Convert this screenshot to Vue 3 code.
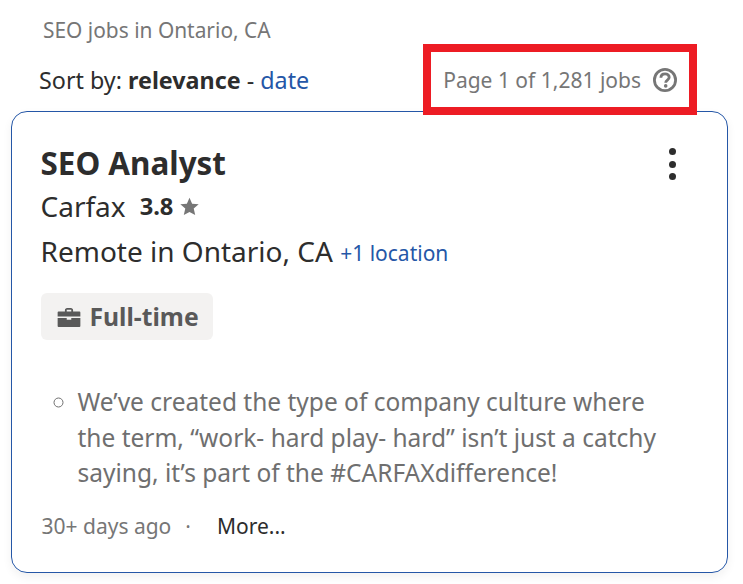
<template>
  <div class="page">
    <div class="search-title">SEO jobs in Ontario, CA</div>
    <div class="toolbar">
      <div class="sort">Sort by: <b>relevance</b> - <a class="link">date</a></div>
      <div class="count">
        <span>Page 1 of 1,281 jobs</span>
        <svg class="help" width="26" height="26" viewBox="0 0 26 26">
          <circle cx="13" cy="13" r="10.6" fill="none" stroke="#767676" stroke-width="2.8" />
          <path d="M8.900 10.800c0-2.500 1.800-4 4.200-4s4.100 1.500 4.100 3.500c0 2.800-3.500 2.800-3.500 5.400" fill="none" stroke="#767676" stroke-width="2.800" />
          <circle cx="13.700" cy="18.900" r="1.800" fill="#767676" />
        </svg>
      </div>
    </div>
    <div class="card">
      <div class="card-head">
        <h2 class="job-title">SEO Analyst</h2>
        <div class="dots"><i></i><i></i><i></i></div>
      </div>
      <div class="company">
        <span>Carfax</span>
        <b class="rating">3.8</b>
        <svg class="star" width="19" height="19" viewBox="0 0 18 18">
          <path d="M9 .6l2.500 5.700 6.200.6-4.700 4.100 1.400 6.100L9 14.100l-5.400 3 1.400-6.100L.3 6.900l6.200-.6z" fill="#767676" />
        </svg>
      </div>
      <div class="location">Remote in Ontario, CA <a class="link more-loc">+1 location</a></div>
      <div class="tag">
        <svg width="24" height="20" viewBox="0 0 25 22">
          <path d="M8 3.500C8 2 9 1 10.500 1h4C16 1 17 2 17 3.500V5h7a1 1 0 0 1 1 1v4.500H0V6a1 1 0 0 1 1-1h7zM10 3v2h5V3z" fill="#595959" fill-rule="evenodd" />
          <path d="M0 12h10v2h5v-2h10v9a1 1 0 0 1-1 1H1a1 1 0 0 1-1-1z" fill="#595959" />
        </svg>
        <span>Full-time</span>
      </div>
      <ul class="snippet">
        <li>We’ve created the type of company culture where the term, “work- hard play- hard” isn’t just a catchy saying, it’s part of the #CARFAXdifference!</li>
      </ul>
      <div class="meta">
        <span>30+ days ago</span>
        <span class="sep">·</span>
        <span class="more">More...</span>
      </div>
    </div>
    <div class="highlight"></div>
  </div>
</template>

<script setup>
</script>

<style>
html, body {
  margin: 0;
  background: #fff;
}
</style>

<style scoped>
.page {
  position: relative;
  width: 743px;
  height: 584px;
  overflow: hidden;
  font-family: "Noto Sans", sans-serif;
  color: #2d2d2d;
  box-sizing: border-box;
  padding: 16px 15px 0 11px;
}

.search-title {
  margin-left: 32px;
  font-size: 20.9px;
  line-height: 28px;
  color: #767676;
}

.toolbar {
  display: flex;
  justify-content: space-between;
  align-items: center;
  height: 40px;
  margin-top: 16px;
  padding: 0 50px 0 28px;
}

.sort {
  font-size: 23.3px;
}

.link {
  color: #2557a7;
}

.count {
  display: flex;
  align-items: center;
  gap: 11px;
  font-size: 21px;
  color: #767676;
}

.card {
  box-sizing: border-box;
  height: 462px;
  margin-top: 11px;
  padding: 30px 29px 0 28.5px;
  border: 1.5px solid #2557a7;
  border-radius: 16px;
  box-shadow: 0 4px 10px rgba(0, 0, 0, 0.06);
}

.card-head {
  display: flex;
  justify-content: space-between;
  align-items: flex-start;
}

.job-title {
  margin: 0;
  font-size: 31.4px;
  line-height: 42px;
  font-weight: 700;
}

.dots {
  display: flex;
  flex-direction: column;
  gap: 5.5px;
  margin: 6px 22px 0 0;
}

.dots i {
  width: 7px;
  height: 7px;
  border-radius: 50%;
  background: #2d2d2d;
}

.company {
  display: flex;
  align-items: center;
  margin-top: 3px;
  font-size: 28px;
  line-height: 38px;
}

.rating {
  margin-left: 14px;
  font-size: 23.7px;
}

.star {
  margin-left: 7px;
}

.location {
  margin-top: 7px;
  font-size: 28px;
  line-height: 38px;
}

.more-loc {
  font-size: 21px;
  vertical-align: 1px;
}

.tag {
  display: inline-flex;
  align-items: center;
  gap: 9px;
  height: 47px;
  margin-top: 21px;
  padding: 0 14px 0 16px;
  font-size: 24.7px;
  font-weight: 700;
  color: #595959;
  background: #f3f2f1;
  border-radius: 6px;
}

.snippet {
  margin: 44px 40px 0 0;
  padding: 0 0 0 37px;
  list-style: circle;
  font-size: 24.5px;
  line-height: 35.5px;
  color: #6f6f6f;
}

.meta {
  display: flex;
  margin-top: 20px;
  padding-left: 1px;
  font-size: 21px;
  line-height: 30px;
  color: #767676;
}

.sep {
  margin-left: 14px;
}

.more {
  margin-left: 26px;
  color: #2d2d2d;
}

.highlight {
  position: absolute;
  left: 423px;
  top: 44px;
  width: 274px;
  height: 71px;
  box-sizing: border-box;
  border: 8px solid #ed1c24;
}
</style>
